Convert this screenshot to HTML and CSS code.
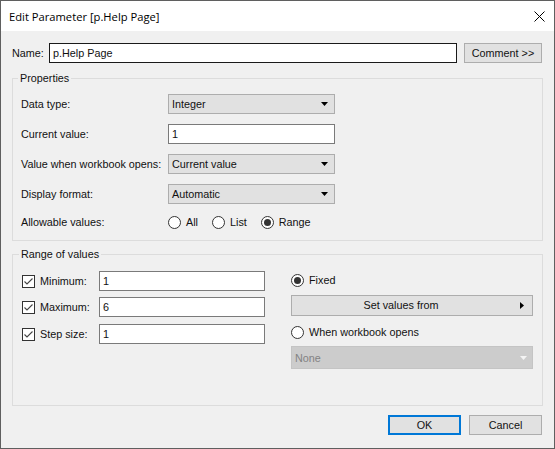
FILE: index.html
```html
<!DOCTYPE html>
<html>
<head>
<meta charset="utf-8">
<link rel="stylesheet" href="styles.css">
</head>
<body>
<div class="window">
  <div class="titlebar">
    <span class="title">Edit Parameter [p.Help Page]</span>
    <svg class="close" width="11" height="11" viewBox="0 0 11 11"><path d="M0.5 0.5 L10.5 10.5 M10.5 0.5 L0.5 10.5" stroke="#000" stroke-width="1" fill="none"/></svg>
  </div>
  <div class="content">
    <div class="name-row">
      <span class="name-label">Name:</span>
      <div class="textbox name-input">p.Help Page</div>
      <div class="button comment">Comment &gt;&gt;</div>
    </div>

    <fieldset class="group props">
      <legend>Properties</legend>
      <div class="prop-grid">
        <span class="plabel">Data type:</span>
        <div class="combo"><span>Integer</span><svg class="arrow" width="7" height="4" viewBox="0 0 7 4"><path d="M0 0 H7 L3.5 4 Z" fill="#000"/></svg></div>
        <span class="plabel">Current value:</span>
        <div class="textbox">1</div>
        <span class="plabel">Value when workbook opens:</span>
        <div class="combo"><span>Current value</span><svg class="arrow" width="7" height="4" viewBox="0 0 7 4"><path d="M0 0 H7 L3.5 4 Z" fill="#000"/></svg></div>
        <span class="plabel">Display format:</span>
        <div class="combo"><span>Automatic</span><svg class="arrow" width="7" height="4" viewBox="0 0 7 4"><path d="M0 0 H7 L3.5 4 Z" fill="#000"/></svg></div>
        <span class="plabel radio-label">Allowable values:</span>
        <div class="radios">
          <span class="radio"><svg width="13" height="13" viewBox="0 0 13 13"><circle cx="6.5" cy="6.5" r="6" fill="#fff" stroke="#333"/></svg>All</span>
          <span class="radio"><svg width="13" height="13" viewBox="0 0 13 13"><circle cx="6.5" cy="6.5" r="6" fill="#fff" stroke="#333"/></svg>List</span>
          <span class="radio"><svg width="13" height="13" viewBox="0 0 13 13"><circle cx="6.5" cy="6.5" r="6" fill="#fff" stroke="#333"/><circle cx="6.5" cy="6.5" r="3.5" fill="#333"/></svg>Range</span>
        </div>
      </div>
    </fieldset>

    <fieldset class="group range">
      <legend>Range of values</legend>
      <div class="range-cols">
        <div class="range-left">
          <div class="crow">
            <svg class="check" width="13" height="13" viewBox="0 0 13 13"><rect x="0.5" y="0.5" width="12" height="12" fill="#fff" stroke="#333"/><path d="M2.5 6.5 L5 9 L10.5 3.5" stroke="#444" stroke-width="1.1" fill="none"/></svg>
            <span class="clabel">Minimum:</span>
            <div class="textbox rinput">1</div>
          </div>
          <div class="crow r2">
            <svg class="check" width="13" height="13" viewBox="0 0 13 13"><rect x="0.5" y="0.5" width="12" height="12" fill="#fff" stroke="#333"/><path d="M2.5 6.5 L5 9 L10.5 3.5" stroke="#444" stroke-width="1.1" fill="none"/></svg>
            <span class="clabel">Maximum:</span>
            <div class="textbox rinput">6</div>
          </div>
          <div class="crow r3">
            <svg class="check" width="13" height="13" viewBox="0 0 13 13"><rect x="0.5" y="0.5" width="12" height="12" fill="#fff" stroke="#333"/><path d="M2.5 6.5 L5 9 L10.5 3.5" stroke="#444" stroke-width="1.1" fill="none"/></svg>
            <span class="clabel">Step size:</span>
            <div class="textbox rinput">1</div>
          </div>
        </div>
        <div class="range-right">
          <span class="radio fixed"><svg width="13" height="13" viewBox="0 0 13 13"><circle cx="6.5" cy="6.5" r="6" fill="#fff" stroke="#333"/><circle cx="6.5" cy="6.5" r="3.5" fill="#333"/></svg>Fixed</span>
          <div class="button setvalues"><span class="sv-text">Set values from</span><svg class="sv-arrow" width="4" height="7" viewBox="0 0 4 7"><path d="M0 0 L4 3.5 L0 7 Z" fill="#000"/></svg></div>
          <span class="radio when"><svg width="13" height="13" viewBox="0 0 13 13"><circle cx="6.5" cy="6.5" r="6" fill="#fff" stroke="#333"/></svg>When workbook opens</span>
          <div class="combo disabled"><span>None</span><svg class="arrow" width="7" height="4" viewBox="0 0 7 4"><path d="M0 0 H7 L3.5 4 Z" fill="#f4f4f4"/></svg></div>
        </div>
      </div>
    </fieldset>

    <div class="buttons">
      <div class="button ok">OK</div>
      <div class="button cancel">Cancel</div>
    </div>
  </div>
</div>
</body>
</html>
```

FILE: styles.css
```css
* { box-sizing: border-box; }
html, body { margin: 0; padding: 0; }
body {
  width: 555px;
  height: 449px;
  overflow: hidden;
  font-family: "Liberation Sans", Arial, sans-serif;
  font-size: 10.8px;
  color: #111;
  background: #f0f0f0;
}
.window {
  width: 555px;
  height: 449px;
  border: 1px solid #5f5f5f;
  display: flex;
  flex-direction: column;
  background: #f0f0f0;
}
.titlebar {
  height: 30px;
  flex-shrink: 0;
  background: #fff;
  display: flex;
  align-items: center;
  padding-left: 8px;
  padding-right: 9px;
}
.title {
  flex: 1;
  font-family: "Open Sans", "Noto Sans", sans-serif;
  font-size: 11.2px;
  color: #000;
}
.close { display: block; }
.content {
  flex: 1;
  padding: 12px 11px 0 11px;
  display: flex;
  flex-direction: column;
}
.name-row {
  display: flex;
  align-items: center;
  height: 20px;
  padding-right: 1px;
}
.name-label { width: 37px; }
.textbox {
  height: 20px;
  line-height: 18px;
  padding: 0 3px;
  background: #fff;
  border: 1px solid #7a7a7a;
  white-space: nowrap;
}
.name-input {
  flex: 1;
  border-color: #1a1a1a;
}
.button {
  height: 20px;
  line-height: 18px;
  background: #e1e1e1;
  border: 1px solid #adadad;
  text-align: center;
}
.comment { width: 78px; margin-left: 7px; }

.group {
  margin: 0;
  border: 1px solid #dcdcdc;
  min-width: 0;
}
.group legend {
  padding: 0 2px;
  margin-left: -3px;
  line-height: 14px;
  font-size: 10.8px;
}
.props {
  margin-top: 8px;
  padding: 9px 8px 10px 8px;
}
.prop-grid {
  display: grid;
  grid-template-columns: 147px 167px;
  grid-template-rows: 20px 20px 20px 20px 16px;
  row-gap: 10px;
  align-items: center;
}
.prop-grid .radios, .prop-grid .radio-label { height: 16px; line-height: 16px; }
.combo {
  height: 20px;
  line-height: 18px;
  background: #e1e1e1;
  border: 1px solid #adadad;
  display: flex;
  align-items: center;
  padding: 0 6px 0 3px;
}
.combo span { flex: 1; }
.combo .arrow { display: block; }
.radios {
  display: flex;
  align-items: center;
  gap: 14px;
}
.radio {
  display: flex;
  align-items: center;
  gap: 5px;
  white-space: nowrap;
}
.radio svg { display: block; flex-shrink: 0; }

.range {
  margin-top: 6px;
  padding: 10px 9px 36px 9px;
}
.range-cols {
  display: grid;
  grid-template-columns: 243px 242px;
  column-gap: 26px;
  align-items: start;
}
.crow {
  display: flex;
  align-items: center;
  height: 20px;
}
.crow.r2 { margin-top: 6px; }
.crow.r3 { margin-top: 7px; }
.check { display: block; flex-shrink: 0; }
.clabel { width: 64px; padding-left: 5px; }
.rinput { width: 166px; }
.range-right {
  display: flex;
  flex-direction: column;
}
.fixed { height: 18px; }
.setvalues {
  margin-top: 6px;
  height: 21px;
  line-height: 19px;
  display: flex;
  align-items: center;
  padding: 0 8px 0 0;
}
.sv-text { flex: 1; text-align: center; padding-right: 10px; }
.sv-arrow { display: block; }
.when { margin-top: 8px; height: 16px; }
.combo.disabled {
  margin-top: 6px;
  height: 23px;
  background: #cccccc;
  border-color: #c4c4c4;
  color: #838383;
  padding-right: 5px;
}
.buttons {
  display: flex;
  justify-content: flex-end;
  gap: 8px;
  margin-top: 9px;
  padding-right: 1px;
}
.buttons .button { width: 73px; }
.ok { border: 2px solid #0078d7; line-height: 16px; }
```
